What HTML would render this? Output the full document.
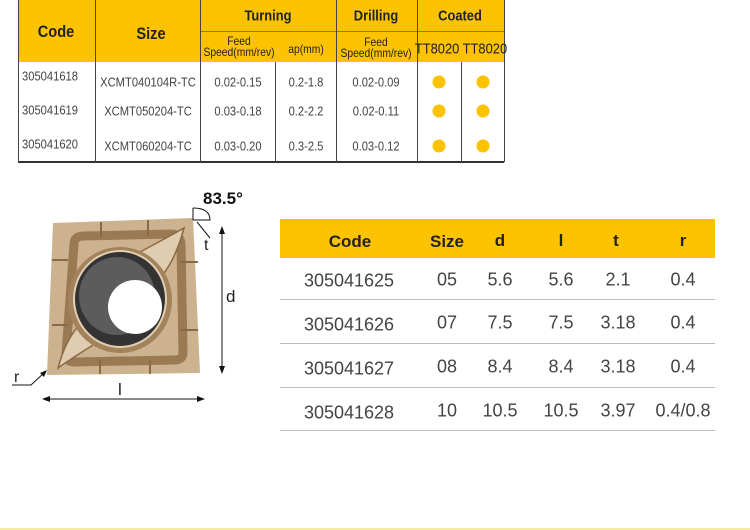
<!DOCTYPE html>
<html><head><meta charset="utf-8"><style>
*{margin:0;padding:0;box-sizing:border-box}
body{width:750px;height:530px;background:#fff;position:relative;overflow:hidden;font-family:"Liberation Sans",Arial,sans-serif;color:#333}
.a{position:absolute}
.y{background:#fdc300}
.t{position:absolute;white-space:nowrap;text-align:center;transform:translate(-50%,-50%)}
.n{transform:translate(-50%,-50%) scaleX(0.86)}
.h{font-weight:bold;color:#222}
.vl{position:absolute;width:1px;background:#444}
.r{font-size:13px;color:#444}
</style></head><body>
<!-- top table -->
<div class="a y" style="left:18px;top:0;width:486px;height:62px"></div>
<div class="a" style="left:18px;top:161px;width:486px;height:2px;background:#333"></div>
<div class="a" style="left:200px;top:31px;width:304px;height:1px;background:#777"></div>
<div class="vl" style="left:18px;top:0;height:162px"></div>
<div class="vl" style="left:95px;top:0;height:162px"></div>
<div class="vl" style="left:200px;top:0;height:162px"></div>
<div class="vl" style="left:275px;top:62px;height:100px"></div>
<div class="vl" style="left:336px;top:0;height:162px"></div>
<div class="vl" style="left:417px;top:0;height:162px"></div>
<div class="vl" style="left:461px;top:62px;height:100px"></div>
<div class="vl" style="left:504px;top:0;height:162px"></div>
<div class="t h n" style="left:56px;top:32px;font-size:17px">Code</div>
<div class="t h n" style="left:151px;top:34px;font-size:17px">Size</div>
<div class="t h n" style="left:268px;top:16px;font-size:15px">Turning</div>
<div class="t h n" style="left:376px;top:16px;font-size:15px">Drilling</div>
<div class="t h n" style="left:460px;top:16px;font-size:15px">Coated</div>
<div class="t n" style="left:239px;top:47px;font-size:12px;line-height:11px;color:#222">Feed<br>Speed(mm/rev)</div>
<div class="t n" style="left:306px;top:49px;font-size:12px;color:#222">ap(mm)</div>
<div class="t n" style="left:376px;top:48px;font-size:12px;line-height:11px;color:#222">Feed<br>Speed(mm/rev)</div>
<div class="t n" style="left:461px;top:49px;font-size:15px;color:#222">TT8020 TT8020</div>
<div class="t r n" style="left:50px;top:76px">305041618</div>
<div class="t r n" style="left:50px;top:110px">305041619</div>
<div class="t r n" style="left:50px;top:144px">305041620</div>
<div class="t r n" style="left:148px;top:82px">XCMT040104R-TC</div>
<div class="t r n" style="left:148px;top:111px">XCMT050204-TC</div>
<div class="t r n" style="left:148px;top:146px">XCMT060204-TC</div>
<div class="t r n" style="left:238px;top:82px">0.02-0.15</div>
<div class="t r n" style="left:238px;top:111px">0.03-0.18</div>
<div class="t r n" style="left:238px;top:146px">0.03-0.20</div>
<div class="t r n" style="left:306px;top:82px">0.2-1.8</div>
<div class="t r n" style="left:306px;top:111px">0.2-2.2</div>
<div class="t r n" style="left:306px;top:146px">0.3-2.5</div>
<div class="t r n" style="left:376px;top:82px">0.02-0.09</div>
<div class="t r n" style="left:376px;top:111px">0.02-0.11</div>
<div class="t r n" style="left:376px;top:146px">0.03-0.12</div>
<svg class="a" style="left:0;top:0" width="750" height="170">
<g fill="#fdc300"><circle cx="439" cy="82" r="6.5"/><circle cx="483" cy="82" r="6.5"/><circle cx="439" cy="111" r="6.5"/><circle cx="483" cy="111" r="6.5"/><circle cx="439" cy="146" r="6.5"/><circle cx="483" cy="146" r="6.5"/></g></svg>
<!-- insert drawing -->
<svg class="a" style="left:0;top:180px" width="280" height="230" viewBox="0 180 280 230">
<polygon points="53,223 193,218 200,373 47,375" fill="#cdb28f"/>
<path d="M74,244 Q74,236 84,236 L172,234 Q180,234 181,244 L183,352 Q183,360 175,360 L74,362 Q66,362 66,354 Z" fill="none" stroke="#9a7a52" stroke-width="9"/>
<g stroke="#8a6a45" stroke-width="2">
<path d="M101,222 L101,238"/><path d="M148,220 L148,236"/><path d="M52,260 L68,260"/><path d="M52,325 L68,325"/>
<path d="M180,262 L198,262"/><path d="M180,330 L198,330"/><path d="M100,360 L100,374"/><path d="M150,360 L150,374"/>
</g>
<path d="M140,252 Q170,236 184,228 Q176,258 162,276 Z" fill="#e0ccb0" stroke="#8a6a45" stroke-width="1.5"/>
<path d="M98,342 Q72,358 58,368 Q66,338 82,322 Z" fill="#e0ccb0" stroke="#8a6a45" stroke-width="1.5"/>
<ellipse cx="120" cy="300" rx="52" ry="53" fill="#a3835c"/>
<ellipse cx="120" cy="299" rx="47" ry="49" fill="#e2cfb2"/>
<ellipse cx="120" cy="299" rx="45" ry="47" fill="#333"/>
<ellipse cx="117" cy="296" rx="38" ry="39" fill="#5c5c5c"/>
<circle cx="135" cy="307" r="27" fill="#fff"/>
<g stroke="#111" stroke-width="1" fill="none">
<path d="M193,208 L193,220"/><path d="M193,208 Q210,208 210,220 L193,220"/>
<path d="M197,222 L210,238"/>
<path d="M222,228 L222,372"/>
<path d="M44,399 L203,399"/>
<path d="M12,385 L31,385 L45,372"/>
</g>
<g fill="#111">
<polygon points="222,226 219,234 225,234"/><polygon points="222,374 219,366 225,366"/>
<polygon points="42,399 50,396 50,402"/><polygon points="205,399 197,396 197,402"/>
<polygon points="47,370 40,373 44,377"/>
</g>
<text x="203" y="204" font-family="Liberation Sans" font-weight="bold" font-size="17" fill="#111">83.5°</text>
<text x="204" y="250" font-family="Liberation Sans" font-size="16" fill="#222">t</text>
<text x="226" y="302" font-family="Liberation Sans" font-size="17" fill="#222">d</text>
<text x="14" y="382" font-family="Liberation Sans" font-size="16" fill="#222">r</text>
<text x="118" y="395" font-family="Liberation Sans" font-size="17" fill="#222">l</text>
</svg>
<!-- bottom table -->
<div class="a y" style="left:280px;top:219px;width:435px;height:39px"></div>
<div class="a" style="left:280px;top:299px;width:435px;height:1px;background:#bbb"></div>
<div class="a" style="left:280px;top:343px;width:435px;height:1px;background:#bbb"></div>
<div class="a" style="left:280px;top:387px;width:435px;height:1px;background:#bbb"></div>
<div class="a" style="left:280px;top:430px;width:435px;height:1px;background:#bbb"></div>
<div class="t h" style="left:350px;top:242px;font-size:17px">Code</div>
<div class="t h" style="left:447px;top:242px;font-size:17px">Size</div>
<div class="t h" style="left:500px;top:241px;font-size:17px">d</div>
<div class="t h" style="left:561px;top:241px;font-size:17px">l</div>
<div class="t h" style="left:616px;top:241px;font-size:17px">t</div>
<div class="t h" style="left:683px;top:241px;font-size:17px">r</div>
<div class="a" style="left:0;top:0;font-size:18px;color:#444">
<div class="t" style="left:349px;top:281px">305041625</div>
<div class="t" style="left:349px;top:325px">305041626</div>
<div class="t" style="left:349px;top:369px">305041627</div>
<div class="t" style="left:349px;top:413px">305041628</div>
<div class="t" style="left:447px;top:280px">05</div><div class="t" style="left:447px;top:323px">07</div><div class="t" style="left:447px;top:367px">08</div><div class="t" style="left:447px;top:411px">10</div>
<div class="t" style="left:500px;top:280px">5.6</div><div class="t" style="left:500px;top:323px">7.5</div><div class="t" style="left:500px;top:367px">8.4</div><div class="t" style="left:500px;top:411px">10.5</div>
<div class="t" style="left:561px;top:280px">5.6</div><div class="t" style="left:561px;top:323px">7.5</div><div class="t" style="left:561px;top:367px">8.4</div><div class="t" style="left:561px;top:411px">10.5</div>
<div class="t" style="left:618px;top:280px">2.1</div><div class="t" style="left:618px;top:323px">3.18</div><div class="t" style="left:618px;top:367px">3.18</div><div class="t" style="left:618px;top:411px">3.97</div>
<div class="t" style="left:683px;top:280px">0.4</div><div class="t" style="left:683px;top:323px">0.4</div><div class="t" style="left:683px;top:367px">0.4</div><div class="t" style="left:683px;top:411px">0.4/0.8</div>
</div>
<div class="a" style="left:0;top:528px;width:750px;height:2px;background:#f6e9a0"></div>
</body></html>
